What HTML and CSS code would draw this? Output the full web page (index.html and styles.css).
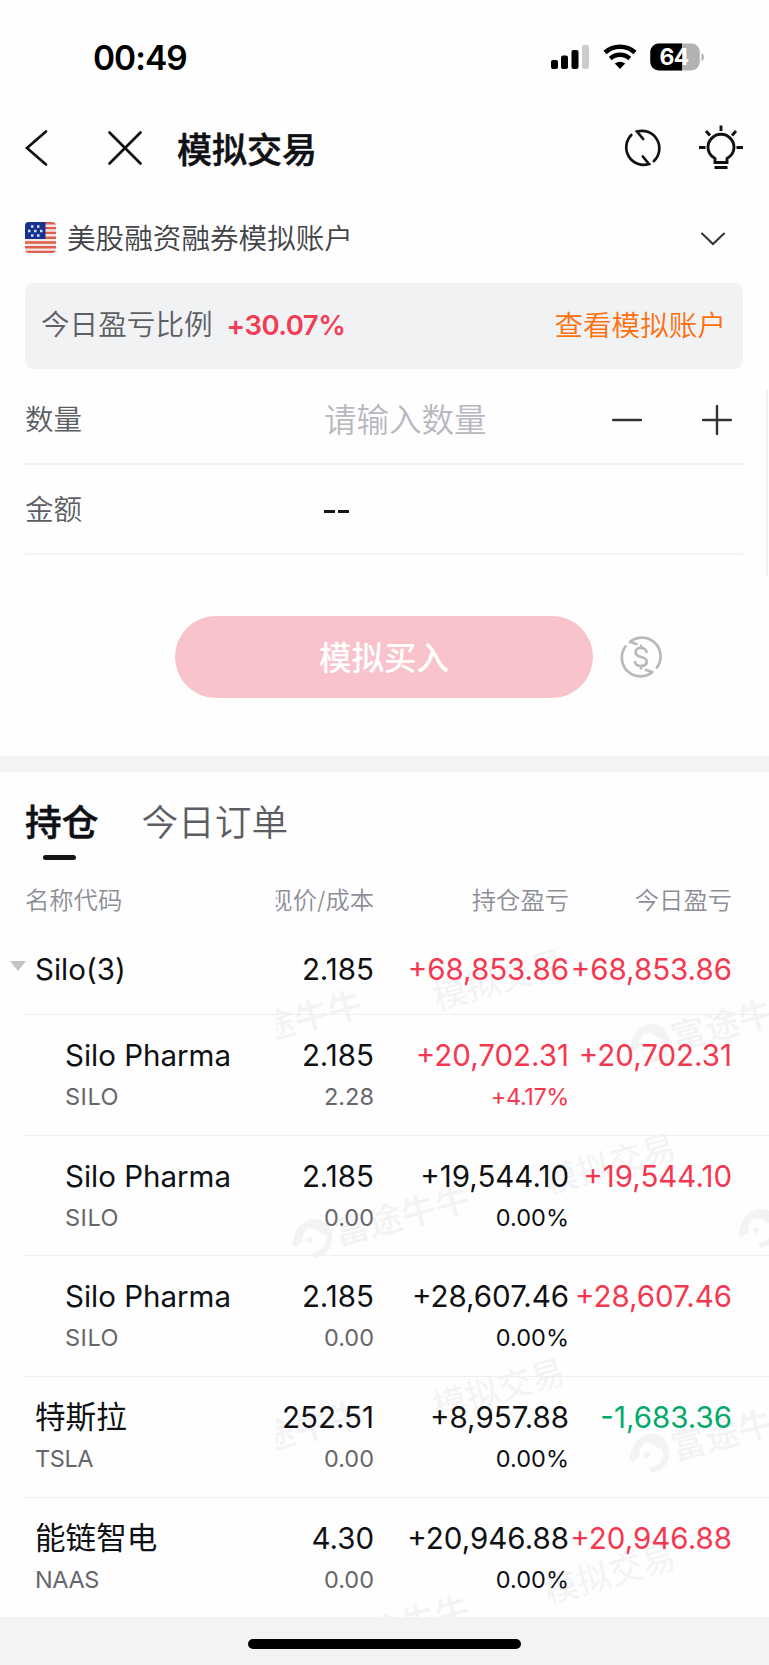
FILE: index.html
```html
<!DOCTYPE html>
<html lang="zh-CN">
<head>
<meta charset="utf-8">
<title>模拟交易</title>
<link rel="stylesheet" href="styles.css">
</head>
<body>
<div class="screen">
  <header class="status">
    <span class="clock">00:49</span>
    <svg class="status-icons" width="156" height="30" viewBox="0 0 156 30">
      <rect x="1" y="17" width="7" height="9" rx="2"/>
      <rect x="11" y="12.500" width="7" height="13.500" rx="2"/>
      <rect x="21.500" y="7" width="7" height="19" rx="2"/>
      <rect x="32" y="2" width="7" height="24" rx="2" fill="#ccc"/>
      <path d="M55 9.500a22.500 22.500 0 0 1 30 0" fill="none" stroke="#000" stroke-width="4.600"/>
      <path d="M60.300 15.500a14.500 14.500 0 0 1 19.400 0" fill="none" stroke="#000" stroke-width="4.400"/>
      <path d="M64.800 20.600a8 8 0 0 1 10.400 0L70 26z"/>
      <clipPath id="batt"><rect x="100.300" y=".5" width="49.500" height="27" rx="8.500"/></clipPath>
      <g clip-path="url(#batt)"><rect x="100" width="51" height="28" fill="#b2b2b2"/><rect x="100" width="32" height="28"/></g>
      <path d="M151.500 10q2.500 1 2.500 4t-2.500 4z" fill="#b2b2b2"/>
      <text class="batt-text" x="124.200" y="22" text-anchor="middle">64</text>
    </svg>
  </header>

  <nav class="nav">
    <svg width="26" height="38" viewBox="0 0 26 38" class="line"><path d="M22 2.500 3 19l19 16.500"/></svg>
    <svg width="36" height="36" viewBox="0 0 36 36" class="line close"><path d="m2.500 2.500 31 31m0-31-31 31"/></svg>
    <h1>模拟交易</h1>
    <svg width="40" height="40" viewBox="0 0 40 40" class="line"><path d="M8.300 7A17.500 17.500 0 0 0 26 36l-6.200-7.500"/><path d="M30.900 33A17.500 17.500 0 0 0 14 3.500l6.200 7.500"/></svg>
    <svg width="46" height="46" viewBox="0 0 46 46" class="line bulb"><path d="M17 37.500v-4c-4.500-2.500-7-6.500-7-11.200a13 13 0 0 1 26 0c0 4.700-2.500 8.700-7 11.200v4zM16.500 42.500h13M23 .5V6M1 22.500h6.500M38.500 22.500H45M8 6l4 4.500M38 6l-4 4.500"/></svg>
  </nav>

  <div class="account">
    <svg width="31" height="31" viewBox="0 0 31 31">
      <clipPath id="flag"><rect width="31" height="31" rx="4"/></clipPath>
      <g clip-path="url(#flag)"><rect width="31" height="31" fill="#f3e9e4"/>
      <path d="M0 1.300h31M0 6.100h31M0 10.900h31M0 15.700h31M0 20.500h31M0 25.300h31M0 30h31" stroke="#de5f50" stroke-width="2.400"/>
      <rect width="20.500" height="17" fill="#16338f"/>
      <path d="M6 4.500h2.500M12 4.500h2.500M3 9h2.500M9 9h2.500M15 9h2.500M6 13.500h2.500M12 13.500h2.500" stroke="#d9e0f5" stroke-width="2.500"/></g>
    </svg>
    <span>美股融资融券模拟账户</span>
    <svg width="24" height="14" viewBox="0 0 24 14" class="chev"><path d="m1 1.500 11 10.500 11-10.500"/></svg>
  </div>

  <div class="card">
    <span>今日盈亏比例</span><b>+30.07%</b><a>查看模拟账户</a>
  </div>

  <section class="form">
    <div class="field">
      <label>数量</label><span class="hint">请输入数量</span>
      <svg width="30" height="30" viewBox="0 0 30 30" class="step"><path d="M1 15h28"/></svg>
      <svg width="30" height="30" viewBox="0 0 30 30" class="step"><path d="M1 15h28M15 1v28"/></svg>
    </div>
    <div class="field amount"><label>金额</label><span class="dash"></span><span class="dash"></span></div>
    <i class="edge"></i>
  </section>

  <div class="action">
    <button>模拟买入</button>
    <svg width="42" height="42" viewBox="0 0 42 42" class="swap"><path d="M5.500 10.500A18.700 18.700 0 0 0 32.500 36L26 34"/><path d="M36.900 31.500A18.700 18.700 0 0 0 9.900 6l6.500 2"/><path d="M26.500 16c-.5-2.800-2.500-4-5.500-4-3.500 0-5.500 1.500-5.500 4.300 0 3 2.500 4 5.500 4.700 3.500.8 5.800 1.800 5.800 4.600s-2.300 4.400-5.800 4.400-5.500-1.600-6-4M21 9.800v2M21 30v2.500"/></svg>
  </div>

  <div class="tabs"><span class="on">持仓</span><span>今日订单</span></div>

  <div class="row thead"><span>名称代码</span><span class="clip"><span>现价/成本</span></span><span>持仓盈亏</span><span>今日盈亏</span></div>

  <main class="list">
    <svg class="marks" width="493" height="687" viewBox="276 930 493 687">
      <defs>
        <g id="sim"><text class="sim" transform="rotate(-16)" text-anchor="middle" y="12">模拟交易</text></g>
        <g id="brand">
          <path fill-rule="evenodd" d="M-20 8C-20-8-10-19 2-19 12-19 19-11 19-1 19 11 13 18 2 20q-2-2-3-5 11-2 14-10 1-5-1-9-4 0-8-4-5-4-10-1-5 4-5 14-3 0-5 4-2 0-4-1zM-7 2l4-4 4 4-4 4z"/>
          <text class="brand" transform="translate(89 -23) rotate(-15)" text-anchor="middle" y="13">富途牛牛</text>
        </g>
      </defs>
      <use href="#sim" x="499" y="980"/><use href="#sim" x="610" y="1164"/><use href="#sim" x="499" y="1389"/><use href="#sim" x="610" y="1574"/>
      <use href="#brand" x="206" y="1043"/><use href="#brand" x="650" y="1043"/><use href="#brand" x="313" y="1238"/><use href="#brand" x="759" y="1228"/>
      <use href="#brand" x="206" y="1453"/><use href="#brand" x="650" y="1453"/><use href="#brand" x="313" y="1648"/>
    </svg>
    <div class="row group"><svg class="tri" width="16" height="10"><path d="M0 0h16L8 10z"/></svg><p>Silo(3)</p><p>2.185</p><p class="up">+68,853.86</p><p class="up">+68,853.86</p></div>
    <div class="row sub"><p>Silo Pharma<small>SILO</small></p><p>2.185<small>2.28</small></p><p class="up">+20,702.31<small class="up tight">+4.17%</small></p><p class="up">+20,702.31</p></div>
    <div class="row sub"><p>Silo Pharma<small>SILO</small></p><p>2.185<small>0.00</small></p><p>+19,544.10<small class="ink">0.00%</small></p><p class="up">+19,544.10</p></div>
    <div class="row sub"><p>Silo Pharma<small>SILO</small></p><p>2.185<small>0.00</small></p><p>+28,607.46<small class="ink">0.00%</small></p><p class="up">+28,607.46</p></div>
    <div class="row"><p><span class="cn">特斯拉</span><small class="tight">TSLA</small></p><p>252.51<small>0.00</small></p><p>+8,957.88<small class="ink">0.00%</small></p><p class="down">-1,683.36</p></div>
    <div class="row"><p><span class="cn">能链智电</span><small class="tight">NAAS</small></p><p>4.30<small>0.00</small></p><p>+20,946.88<small class="ink">0.00%</small></p><p class="up">+20,946.88</p></div>
  </main>
  <footer class="home"><i></i></footer>
</div>
</body>
</html>
```
FILE: styles.css
```css
* { box-sizing: border-box; }
body { margin: 0; background: #fefefe; }
.screen {
  width: 769px; height: 1665px; overflow: hidden;
  display: flex; flex-direction: column;
  color: #0f1114; background: #fefefe;
  font-family: Inter, "Noto Sans CJK SC", sans-serif;
}
.screen > * { flex: none; }
svg { display: block; flex: none; }

.status { height: 110px; padding: 40px 63px 0 93px; display: flex; justify-content: space-between; align-items: flex-start; }
.clock { font-size: 33.500px; line-height: 36px; font-weight: 600; letter-spacing: -1px; color: #000; }
.status-icons { margin-top: 3px; }
.batt-text { font-size: 23px; font-weight: 700; letter-spacing: -.5px; fill: #fff; }

.nav { height: 76px; display: flex; align-items: center; padding: 0 25px 0 24px; }
.line { fill: none; stroke: #111; stroke-width: 2.700; stroke-linecap: round; }
.close { margin-left: 57px; }
.nav h1 { margin: 0 auto 0 34px; padding-top: 3px; font-size: 35px; line-height: 44px; font-weight: 500; -webkit-text-stroke: .5px; }
.bulb { margin-left: 35px; stroke-linecap: butt; stroke-width: 2.900; }

.account { height: 97px; padding: 5px 44px 0 25px; display: flex; align-items: center; color: #414346; font-size: 28.600px; font-weight: 350; }
.account span { margin: 0 auto 0 11px; padding-top: 3px; line-height: 40px; }
.chev { margin-top: 3px; fill: none; stroke: #333; stroke-width: 2; stroke-linecap: round; }

.card { height: 86px; margin: 0 26px 0 25px; padding: 0 17px 2px 16px; border-radius: 8px; background: #f1f2f4; display: flex; align-items: center; font-size: 28.600px; line-height: 40px; font-weight: 350; color: #5c5e63; }
.card b { margin: 0 auto 0 14px; color: #f23d56; font-weight: 600; font-size: 27.500px; letter-spacing: -.5px; }
.card a { padding-top: 1px; color: #ff6f0f; }

.form { position: relative; padding: 0 26px 0 25px; }
.field { height: 96px; padding-top: 7px; border-bottom: 2px solid #f2f2f3; display: flex; align-items: center; font-size: 28.600px; line-height: 40px; font-weight: 350; color: #5c5e63; }
.field label { width: 299px; }
.field.amount { height: 90px; padding-top: 1px; }
.hint { margin-right: auto; padding-top: 3px; font-size: 32.500px; color: #b8b8bf; }
.step { fill: none; stroke: #333; stroke-width: 2.400; stroke-linecap: round; margin-right: 11px; }
.step + .step { margin-left: 49px; }
.dash { width: 11px; height: 3px; margin: 3px 3px 0 0; background: #15171a; }
.edge { position: absolute; left: 766px; top: 21px; width: 2px; height: 186px; background: #f1f1f2; }

.action { height: 217px; padding: 61px 0 0 175px; display: flex; align-items: flex-start; border-bottom: 16px solid #f3f3f3; }
.action button { width: 418px; height: 82px; padding: 0 0 2px; border: 0; border-radius: 41px; background: #f9c3cc; color: #fff; font: 500 32.500px/44px "Noto Sans CJK SC", sans-serif; }
.swap { margin: 20px 0 0 27px; fill: none; stroke: #b9b9b9; stroke-width: 2.700; stroke-linecap: round; stroke-linejoin: round; }

.tabs { height: 94px; padding: 25px 25px 0; display: flex; gap: 43px; font-size: 36.700px; line-height: 52px; font-weight: 350; color: #5c5e63; }
.on { position: relative; color: #0f1114; font-weight: 500; -webkit-text-stroke: .5px; }
.on::after { content: ""; position: absolute; left: 18px; top: 58px; width: 33px; height: 5px; border-radius: 3px; background: #15171a; }

.row { position: relative; display: grid; grid-template-columns: 251px 98px 195px 163px; height: 120.700px; margin-left: 25px; padding-top: 20px; border-bottom: 1.500px solid #efeff0; text-align: right; }
.row p { margin: 0; justify-self: end; font-size: 29.500px; line-height: 40px; white-space: nowrap; }
.row p:first-child, .tri + p { justify-self: start; padding-left: 10px; text-align: left; }
.row.sub p:first-child { padding-left: 40px; }
.row small { display: block; margin-top: 5px; font-size: 23.500px; line-height: 34px; color: #65676d; }
.row.sub p:first-child small { letter-spacing: .5px; }
.row small.tight { letter-spacing: -.4px; }
.row small.ink { color: #0f1114; }
.row .up, .row small.up { color: #f5384f; }
.down { color: #03aa6c; }
.cn { font-size: 30.600px; }
.row:last-child { border: 0; }

.thead { height: 64px; padding-top: 16px; border: 0; font-size: 24.300px; line-height: 36px; font-weight: 350; color: #8c8f96; }
.thead > :first-child { text-align: left; }
.clip { display: flex; justify-content: flex-end; overflow: hidden; }
.clip span { flex: none; }

.list { position: relative; height: 687px; overflow: hidden; }
.group { height: 85px; padding-top: 19px; }
.tri { position: absolute; left: -15px; top: 31px; fill: #c3c4c7; }
.marks { position: absolute; left: 276px; top: 0; fill: #f3f3f4; }
.sim { font-size: 33.500px; letter-spacing: .3px; }
.brand { font-size: 34px; font-weight: 500; letter-spacing: .8px; }

.home { height: 48px; padding-top: 22px; background: #f3f3f3; }
.home i { display: block; width: 273px; height: 10px; margin: 0 auto; border-radius: 5px; background: #000; }
```
